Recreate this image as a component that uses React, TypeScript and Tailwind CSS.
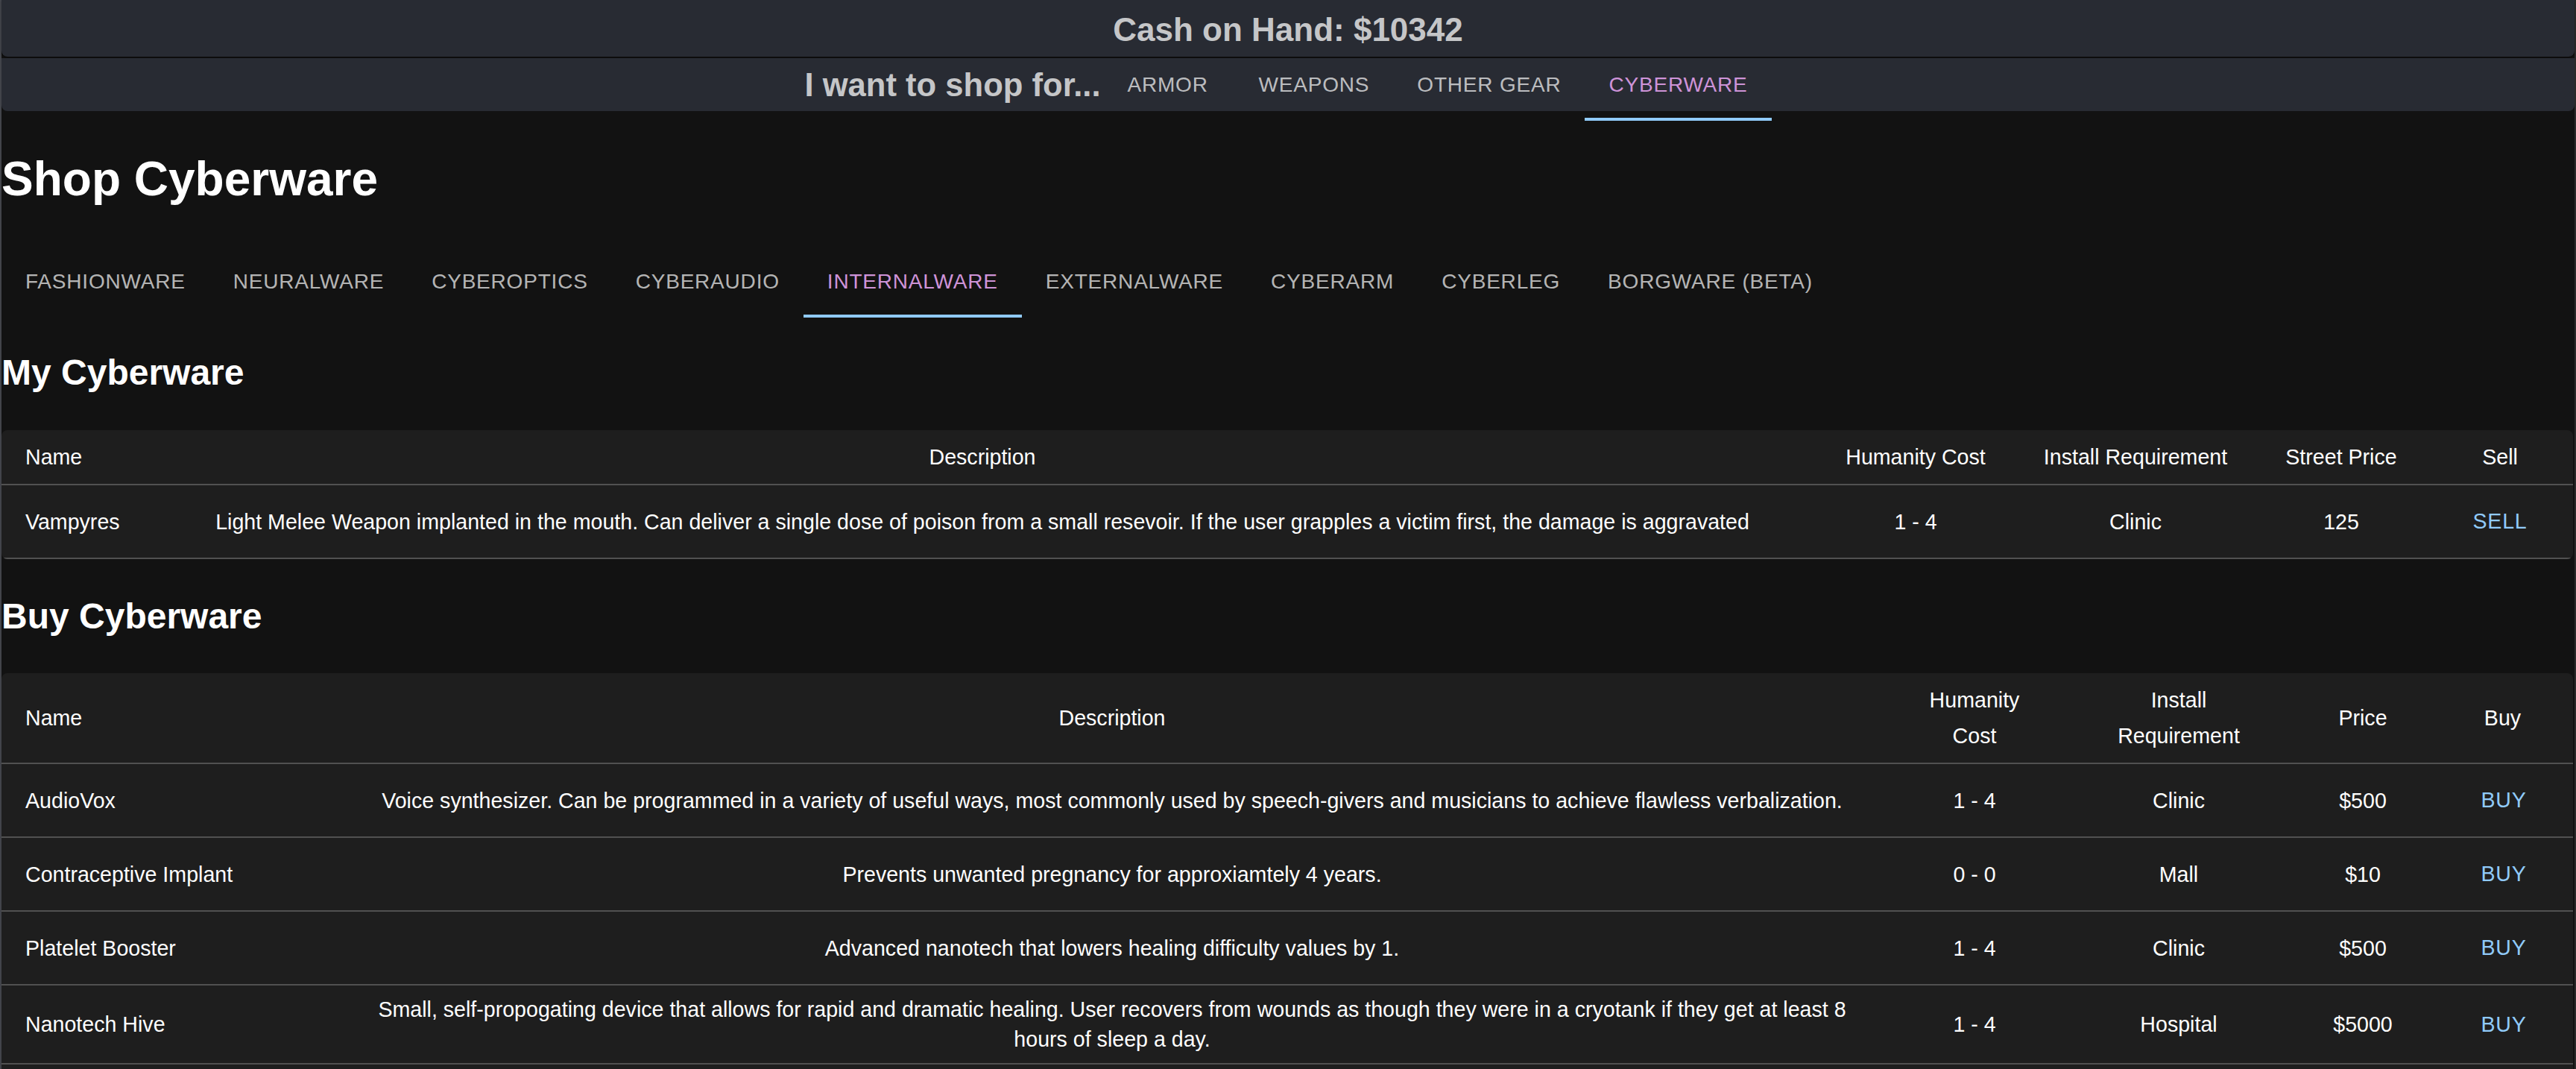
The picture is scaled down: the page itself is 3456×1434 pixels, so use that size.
import { useState } from 'react';

const gearTabs = ['Armor', 'Weapons', 'Other Gear', 'Cyberware'];
const wareTabs = [
  'Fashionware',
  'Neuralware',
  'Cyberoptics',
  'Cyberaudio',
  'Internalware',
  'Externalware',
  'Cyberarm',
  'Cyberleg',
  'Borgware (Beta)',
];

const owned = [
  {
    name: 'Vampyres',
    desc: 'Light Melee Weapon implanted in the mouth. Can deliver a single dose of poison from a small resevoir. If the user grapples a victim first, the damage is aggravated',
    humanity: '1 - 4',
    install: 'Clinic',
    price: '125',
  },
];

const catalog = [
  {
    name: 'AudioVox',
    desc: 'Voice synthesizer. Can be programmed in a variety of useful ways, most commonly used by speech-givers and musicians to achieve flawless verbalization.',
    humanity: '1 - 4',
    install: 'Clinic',
    price: '$500',
  },
  {
    name: 'Contraceptive Implant',
    desc: 'Prevents unwanted pregnancy for approxiamtely 4 years.',
    humanity: '0 - 0',
    install: 'Mall',
    price: '$10',
  },
  {
    name: 'Platelet Booster',
    desc: 'Advanced nanotech that lowers healing difficulty values by 1.',
    humanity: '1 - 4',
    install: 'Clinic',
    price: '$500',
  },
  {
    name: 'Nanotech Hive',
    desc: 'Small, self-propogating device that allows for rapid and dramatic healing. User recovers from wounds as though they were in a cryotank if they get at least 8 hours of sleep a day.',
    humanity: '1 - 4',
    install: 'Hospital',
    price: '$5000',
  },
  {
    name: 'Enhanced Antibodies',
    desc: 'Nanotech that boosts the immune system and speeds natural healing.',
    humanity: '1 - 4',
    install: 'Clinic',
    price: '$500',
  },
];

function Tab({ label, active, onClick }: { label: string; active: boolean; onClick: () => void }) {
  return (
    <button
      onClick={onClick}
      className={`relative h-[96px] min-w-[180px] px-[32px] text-[28px] leading-[40px] uppercase tracking-[0.8px] whitespace-nowrap ${
        active ? 'text-[#ce93d8]' : 'text-white/70'
      }`}
    >
      {label}
      {active && <span className="absolute left-0 right-0 bottom-0 h-[4px] bg-[#90caf9]" />}
    </button>
  );
}

function Th({ children, left }: { children: React.ReactNode; left?: boolean }) {
  return (
    <th
      className={`px-[32px] py-[12px] text-[28.6px] leading-[48px] font-normal text-white border-b-2 border-[#515151] ${
        left ? 'text-left' : 'text-center'
      }`}
    >
      {children}
    </th>
  );
}

function Td({ children, left }: { children: React.ReactNode; left?: boolean }) {
  return (
    <td
      className={`px-[32px] py-[12px] text-[28.6px] leading-[40px] text-white border-b-2 border-[#515151] align-middle ${
        left ? 'text-left' : 'text-center'
      }`}
    >
      {children}
    </td>
  );
}

function ActionButton({ label }: { label: string }) {
  return (
    <button className="inline-flex items-center justify-center min-w-[128px] px-[16px] py-[12px] text-[28.6px] leading-[49px] uppercase tracking-[0.8px] text-[#90caf9]">
      {label}
    </button>
  );
}

export default function App() {
  const [gear, setGear] = useState('Cyberware');
  const [ware, setWare] = useState('Internalware');

  return (
    <div className="min-h-screen bg-[#121212] border-l-2 border-l-[#42444a] border-r-2 border-r-[#2a2a2a] font-['Liberation_Sans',Arial,sans-serif] text-white">
      {/* cash bar */}
      <div className="h-[76px] bg-[#282b33] rounded-b-[8px] flex items-center justify-center pt-[4px] shadow-[0_2px_2px_rgba(0,0,0,0.35)]">
        <div className="text-[44px] leading-[50px] font-bold text-[#c5c6c8]">Cash on Hand: $10342</div>
      </div>

      {/* shop category bar */}
      <div className="relative z-10 mt-[2px] h-[71px] bg-[#282b33] rounded-b-[8px] flex items-center justify-center">
        <div className="text-[43.6px] leading-[50px] font-bold text-[#c5c6c8] whitespace-nowrap">I want to shop for...</div>
        <div className="flex">
          {gearTabs.map((t) => (
            <Tab key={t} label={t} active={gear === t} onClick={() => setGear(t)} />
          ))}
        </div>
      </div>

      <h1 className="mt-[59px] text-[64px] leading-[64px] font-bold">Shop Cyberware</h1>

      <div className="mt-[58px] flex">
        {wareTabs.map((t) => (
          <Tab key={t} label={t} active={ware === t} onClick={() => setWare(t)} />
        ))}
      </div>

      <h2 className="mt-[50px] text-[48px] leading-[48px] font-bold">My Cyberware</h2>

      <div className="mt-[53px] mr-[2px] rounded-[8px] overflow-hidden bg-[#1e1e1e]">
        <table className="w-full table-fixed border-collapse">
          <colgroup>
            <col className="w-[198px]" />
            <col className="w-[2236px]" />
            <col className="w-[268px]" />
            <col className="w-[322px]" />
            <col className="w-[230px]" />
            <col className="w-[196px]" />
          </colgroup>
          <thead>
            <tr>
              <Th left>Name</Th>
              <Th>Description</Th>
              <Th>Humanity Cost</Th>
              <Th>Install Requirement</Th>
              <Th>Street Price</Th>
              <Th>Sell</Th>
            </tr>
          </thead>
          <tbody>
            {owned.map((c) => (
              <tr key={c.name}>
                <Td left>{c.name}</Td>
                <Td>{c.desc}</Td>
                <Td>{c.humanity}</Td>
                <Td>{c.install}</Td>
                <Td>{c.price}</Td>
                <Td>
                  <ActionButton label="Sell" />
                </Td>
              </tr>
            ))}
          </tbody>
        </table>
      </div>

      <h2 className="mt-[53px] text-[48px] leading-[48px] font-bold">Buy Cyberware</h2>

      <div className="mt-[52px] mr-[2px] rounded-[8px] overflow-hidden bg-[#1e1e1e]">
        <table className="w-full table-fixed border-collapse">
          <colgroup>
            <col className="w-[453px]" />
            <col className="w-[2074px]" />
            <col className="w-[240px]" />
            <col className="w-[308px]" />
            <col className="w-[186px]" />
            <col className="w-[189px]" />
          </colgroup>
          <thead>
            <tr>
              <Th left>Name</Th>
              <Th>Description</Th>
              <Th>Humanity Cost</Th>
              <Th>Install Requirement</Th>
              <Th>Price</Th>
              <Th>Buy</Th>
            </tr>
          </thead>
          <tbody>
            {catalog.map((c) => (
              <tr key={c.name}>
                <Td left>{c.name}</Td>
                <Td>{c.desc}</Td>
                <Td>{c.humanity}</Td>
                <Td>{c.install}</Td>
                <Td>{c.price}</Td>
                <Td>
                  <ActionButton label="Buy" />
                </Td>
              </tr>
            ))}
          </tbody>
        </table>
      </div>
    </div>
  );
}
